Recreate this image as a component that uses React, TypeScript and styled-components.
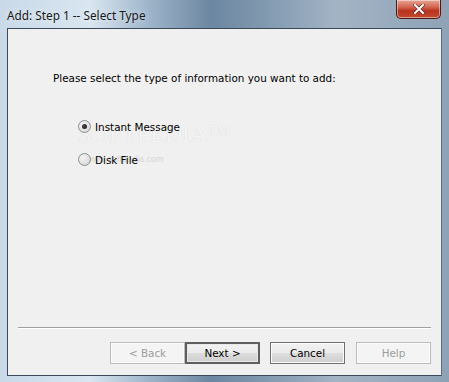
import React from "react";
import styled, { createGlobalStyle } from "styled-components";

const Global = createGlobalStyle`
  html, body { margin: 0; padding: 0; }
  body { width: 449px; height: 382px; overflow: hidden; font-family: "DejaVu Sans", "Liberation Sans", sans-serif; }
`;

const Window = styled.div`
  position: relative;
  width: 449px;
  height: 382px;
  display: flex;
  flex-direction: column;
  box-sizing: border-box;
  background: linear-gradient(90deg, #c9d9e8 0%, #d9e6f1 20%, #9fb5ca 33%, #6c87a2 47%, #7f97ae 58%, #a3b4c5 75%, #8ea2b6 100%);
  overflow: hidden;
`;

const TitleBar = styled.div`
  height: 28px;
  display: flex;
  align-items: flex-start;
  justify-content: space-between;
  padding: 0 7px 0 7px;
  box-sizing: border-box;
`;

const Title = styled.div`
  margin-top: 7px;
  font-family: "Noto Sans", "Open Sans", sans-serif;
  font-size: 11.8px;
  color: #1a1a1a;
  text-shadow: 0 0 6px rgba(255,255,255,0.7);
`;

const CloseButton = styled.div`
  width: 45px;
  height: 19px;
  margin-right: 1px;
  box-sizing: border-box;
  border: 1px solid #4a1a14;
  border-top: none;
  border-radius: 0 0 5px 5px;
  background: linear-gradient(180deg, #e8a597 0%, #d2644f 40%, #b9331d 60%, #c44a2e 100%);
  box-shadow: inset 0 0 0 1px rgba(255,255,255,0.45);
  display: flex;
  align-items: center;
  justify-content: center;
`;

const Client = styled.div`
  margin: 0 7px;
  height: 348px;
  box-sizing: border-box;
  border: 1px solid #3b4a5a;
  border-right-color: #5a6e80;
  background: #f0f0f0;
  display: flex;
  flex-direction: column;
  position: relative;
`;

const Body = styled.div`
  flex: 1;
  padding: 43px 0 0 45px;
  display: flex;
  flex-direction: column;
`;

const Prompt = styled.div`
  font-size: 10.4px;
  color: #000;
`;

const RadioGroup = styled.div`
  display: flex;
  flex-direction: column;
  gap: 20px;
  margin-top: 36px;
  margin-left: 25px;
`;

const RadioRow = styled.label`
  display: flex;
  align-items: center;
  gap: 4px;
  font-size: 10.4px;
  color: #000;
  height: 13px;
`;

const RadioCircle = styled.span<{ $checked?: boolean }>`
  width: 13px;
  height: 13px;
  box-sizing: border-box;
  border-radius: 50%;
  border: 1px solid #8e8f8f;
  background: radial-gradient(circle at 35% 35%, #f4f4f4 0%, #dcdcdc 70%, #cfcfcf 100%);
  display: flex;
  align-items: center;
  justify-content: center;
  &::after {
    content: "";
    display: ${(p) => (p.$checked ? "block" : "none")};
    width: 5px;
    height: 5px;
    border-radius: 50%;
    background: radial-gradient(circle at 40% 40%, #4a4a4a, #0c0c0c);
  }
`;

const Separator = styled.div`
  margin: 0 10px 0 10px;
  height: 0;
  border-top: 1px solid #a0a0a0;
  border-bottom: 1px solid #ffffff;
`;

const ButtonBar = styled.div`
  display: flex;
  justify-content: flex-end;
  padding: 13px 10px 11px 0;
`;

const Button = styled.div<{ $disabled?: boolean; $default?: boolean; $gap?: number }>`
  width: 75px;
  height: 22px;
  box-sizing: border-box;
  margin-left: ${(p) => p.$gap ?? 0}px;
  border: 1px solid ${(p) => (p.$disabled ? "#bcbcbc" : "#707070")};
  background: linear-gradient(180deg, #f2f2f2 0%, #ebebeb 50%, #dddddd 51%, #cfcfcf 100%);
  ${(p) => (p.$disabled ? "background: #f4f4f4;" : "")}
  ${(p) => (p.$default ? "border: 2px solid #5e5e5e; box-shadow: inset 0 0 0 1px #e8e8e8;" : "box-shadow: inset 0 0 0 1px #fcfcfc;")}
  display: flex;
  align-items: center;
  justify-content: center;
  font-size: 10.4px;
  color: ${(p) => (p.$disabled ? "#9c9c9c" : "#000")};
`;

const BottomFrame = styled.div`
  flex: 1;
`;

const Watermark = styled.div`
  position: absolute;
  left: 70px;
  top: 92px;
  font-family: "Liberation Serif", serif;
  font-size: 24px;
  letter-spacing: 0px;
  color: rgba(255, 255, 255, 0.75);
  text-shadow: 0 0 1px rgba(150, 150, 150, 0.35);
  pointer-events: none;
  z-index: 0;
`;

const WatermarkUrl = styled.div`
  position: absolute;
  left: 78px;
  top: 125px;
  font-family: "Liberation Sans Narrow", "Liberation Sans", sans-serif;
  font-size: 9px;
  color: rgba(200, 200, 200, 0.7);
  pointer-events: none;
  z-index: 0;
`;

export default function App() {
  return (
    <>
      <Global />
      <Window>
        <TitleBar>
          <Title>Add: Step 1 -- Select Type</Title>
          <CloseButton>
            <svg width="12" height="10" viewBox="0 0 12 10">
              <path d="M2 1 L10 9 M10 1 L2 9" stroke="#5a2a20" strokeWidth="3.2" strokeLinecap="square" />
              <path d="M2 1 L10 9 M10 1 L2 9" stroke="#ffffff" strokeWidth="2" strokeLinecap="square" />
            </svg>
          </CloseButton>
        </TitleBar>
        <Client>
          <Watermark>SOFTPEDIA™</Watermark>
          <WatermarkUrl>www.softpedia.com</WatermarkUrl>
          <Body style={{ position: "relative", zIndex: 1 }}>
            <Prompt>Please select the type of information you want to add:</Prompt>
            <RadioGroup>
              <RadioRow>
                <RadioCircle $checked />
                Instant Message
              </RadioRow>
              <RadioRow>
                <RadioCircle />
                Disk File
              </RadioRow>
            </RadioGroup>
          </Body>
          <Separator />
          <ButtonBar>
            <Button $disabled>&lt; Back</Button>
            <Button $default>Next &gt;</Button>
            <Button $gap={10}>Cancel</Button>
            <Button $gap={11} $disabled>Help</Button>
          </ButtonBar>
        </Client>
        <BottomFrame />
      </Window>
    </>
  );
}
